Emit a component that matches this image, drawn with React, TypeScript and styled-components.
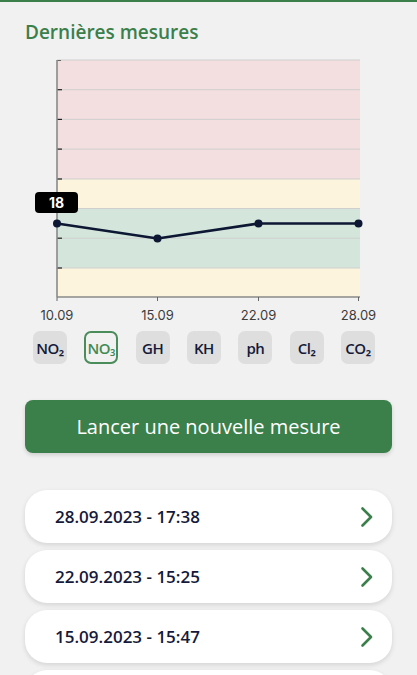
import React, { useState } from "react";
import styled, { createGlobalStyle } from "styled-components";

const GlobalStyle = createGlobalStyle`
  html, body {
    margin: 0;
    padding: 0;
    background: #f1f1f1;
  }
  body {
    font-family: "Open Sans", "Noto Sans", sans-serif;
    overflow: hidden;
  }
`;

const Screen = styled.div`
  width: 417px;
  height: 675px;
  border-top: 2px solid #3b7f4b;
  box-sizing: border-box;
  padding: 0 25px;
  overflow: hidden;
`;

const Title = styled.h2`
  margin: 17px 0 0;
  font-size: 19px;
  line-height: 26px;
  font-weight: 600;
  color: #3b7f4b;
`;

const Chart = styled.svg`
  display: block;
  margin-top: 5px;
`;

const ChipRow = styled.div`
  display: flex;
  justify-content: space-between;
  padding: 0 17px 0 8px;
  margin-top: 6px;
`;

const Chip = styled.button<{ $active?: boolean }>`
  width: 34px;
  height: 33px;
  padding: 0;
  box-sizing: border-box;
  border-radius: 7px;
  border: ${(p) => (p.$active ? "2px solid #4a8c5a" : "none")};
  background: ${(p) => (p.$active ? "transparent" : "#dedede")};
  color: ${(p) => (p.$active ? "#3f8a52" : "#141a38")};
  font-family: "Open Sans", sans-serif;
  font-weight: 600;
  font-size: 15px;
  letter-spacing: -0.5px;
  white-space: nowrap;
  cursor: pointer;
`;

const MainButton = styled.button`
  display: block;
  width: 100%;
  height: 53px;
  margin-top: 36px;
  border: none;
  border-radius: 8px;
  background: #3b7f4b;
  color: #ffffff;
  font-family: "Open Sans", sans-serif;
  font-size: 20px;
  box-shadow: 0 2px 4px rgba(0, 0, 0, 0.15);
  cursor: pointer;
`;

const List = styled.div`
  display: flex;
  flex-direction: column;
  gap: 7px;
  margin-top: 37px;
`;

const Card = styled.div`
  display: flex;
  align-items: center;
  justify-content: space-between;
  flex-shrink: 0;
  height: 53px;
  padding: 0 18px 0 30px;
  border-radius: 22px;
  background: #ffffff;
  box-shadow: 0 2px 5px rgba(0, 0, 0, 0.12);
`;

const CardText = styled.span`
  font-size: 17px;
  font-weight: 600;
  color: #151a3a;
`;

const bands = [
  { y: 60, h: 119, fill: "#f3dfdf" },
  { y: 179, h: 29.5, fill: "#fcf4dc" },
  { y: 208.5, h: 59.5, fill: "#d4e6dc" },
  { y: 268, h: 29, fill: "#fcf4dc" },
];

const gridLines = [60, 89.7, 119.4, 149.1, 179, 208.5, 238.2, 268];
const ticks = [89.7, 119.4, 149.1, 179, 238.2, 268];
const points = [
  { x: 57, y: 223.5, label: "10.09" },
  { x: 157.5, y: 238.5, label: "15.09" },
  { x: 258.5, y: 223.5, label: "22.09" },
  { x: 358.5, y: 223.5, label: "28.09" },
];

const chips = ["NO₂", "NO₃", "GH", "KH", "ph", "Cl₂", "CO₂"];

const history = [
  "28.09.2023 - 17:38",
  "22.09.2023 - 15:25",
  "15.09.2023 - 15:47",
  "10.09.2023 - 09:12",
];

function Chevron() {
  return (
    <svg width="14" height="22" viewBox="0 0 14 22">
      <path
        d="M2.5 2.5 L11 11 L2.5 19.5"
        fill="none"
        stroke="#3b7f4b"
        strokeWidth="2.6"
        strokeLinecap="round"
        strokeLinejoin="round"
      />
    </svg>
  );
}

function MeasureChart() {
  // svg starts at x=25, y=50 of the page
  return (
    <Chart width="367" height="275" viewBox="25 50 367 275">
      {bands.map((b) => (
        <rect key={b.y} x={57} y={b.y} width={303} height={b.h} fill={b.fill} />
      ))}
      {gridLines.map((y) => (
        <line key={y} x1={57} x2={360} y1={y} y2={y} stroke="#cfcfcf" strokeWidth="1" />
      ))}
      {ticks.map((y) => (
        <line key={y} x1={57} x2={62} y1={y} y2={y} stroke="#222" strokeWidth="1.2" />
      ))}
      <line x1={57} x2={61} y1={60.5} y2={60.5} stroke="#666" strokeWidth="1" />
      <line x1={57} x2={57} y1={60} y2={297} stroke="#8a8a8a" strokeWidth="1.6" />
      <line x1={57} x2={360} y1={297} y2={297} stroke="#8a8a8a" strokeWidth="1.4" />
      {points.map((p) => (
        <line key={p.label} x1={p.x} x2={p.x} y1={297} y2={301} stroke="#666" strokeWidth="1" />
      ))}
      <polyline
        points={points.map((p) => `${p.x},${p.y}`).join(" ")}
        fill="none"
        stroke="#0d1633"
        strokeWidth="2.6"
        strokeLinejoin="round"
      />
      {points.map((p) => (
        <circle key={p.label} cx={p.x} cy={p.y} r="4" fill="#0d1633" />
      ))}
      <rect x={35} y={192} width={43} height={21} rx={4} fill="#000" />
      <text
        x={56.5}
        y={207.5}
        textAnchor="middle"
        fill="#fff"
        fontSize="14"
        fontWeight="700"
        fontFamily="Inter, sans-serif"
      >
        18
      </text>
      {points.map((p) => (
        <text
          key={p.label}
          x={p.x}
          y={320}
          textAnchor="middle"
          fill="#3c3c3c"
          fontSize="13"
          fontFamily="Inter, sans-serif"
        >
          {p.label}
        </text>
      ))}
    </Chart>
  );
}

export default function App() {
  const [selected, setSelected] = useState("NO₃");

  return (
    <>
      <GlobalStyle />
      <Screen>
        <Title>Dernières mesures</Title>
        <MeasureChart />
        <ChipRow>
          {chips.map((c) => (
            <Chip key={c} $active={c === selected} onClick={() => setSelected(c)}>
              {c}
            </Chip>
          ))}
        </ChipRow>
        <MainButton>Lancer une nouvelle mesure</MainButton>
        <List>
          {history.map((h) => (
            <Card key={h}>
              <CardText>{h}</CardText>
              <Chevron />
            </Card>
          ))}
        </List>
      </Screen>
    </>
  );
}
